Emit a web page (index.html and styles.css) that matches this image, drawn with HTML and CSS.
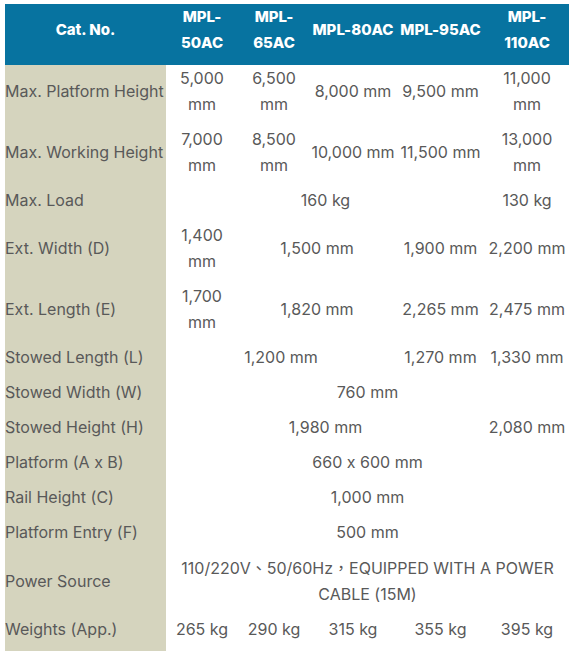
FILE: index.html
```html
<!DOCTYPE html>
<html lang="en">
<head>
<meta charset="utf-8">
<title>MPL Specifications</title>
<link rel="stylesheet" href="styles.css">
</head>
<body>
<div class="wrap">
<table class="spec">
  <colgroup>
    <col class="c-label">
    <col class="c-a">
    <col class="c-b">
    <col class="c-c">
    <col class="c-d">
    <col class="c-e">
  </colgroup>
  <thead>
    <tr>
      <th>Cat. No.</th>
      <th>MPL-<br>50AC</th>
      <th>MPL-<br>65AC</th>
      <th>MPL-80AC</th>
      <th>MPL-95AC</th>
      <th>MPL-<br>110AC</th>
    </tr>
  </thead>
  <tbody>
    <tr>
      <td class="label">Max. Platform Height</td>
      <td>5,000<br>mm</td>
      <td>6,500<br>mm</td>
      <td>8,000 mm</td>
      <td>9,500 mm</td>
      <td>11,000<br>mm</td>
    </tr>
    <tr>
      <td class="label">Max. Working Height</td>
      <td>7,000<br>mm</td>
      <td>8,500<br>mm</td>
      <td>10,000 mm</td>
      <td>11,500 mm</td>
      <td>13,000<br>mm</td>
    </tr>
    <tr>
      <td class="label">Max. Load</td>
      <td colspan="4">160 kg</td>
      <td>130 kg</td>
    </tr>
    <tr>
      <td class="label">Ext. Width (D)</td>
      <td>1,400<br>mm</td>
      <td colspan="2">1,500 mm</td>
      <td>1,900 mm</td>
      <td>2,200 mm</td>
    </tr>
    <tr>
      <td class="label">Ext. Length (E)</td>
      <td>1,700<br>mm</td>
      <td colspan="2">1,820 mm</td>
      <td>2,265 mm</td>
      <td>2,475 mm</td>
    </tr>
    <tr>
      <td class="label">Stowed Length (L)</td>
      <td colspan="3">1,200 mm</td>
      <td>1,270 mm</td>
      <td>1,330 mm</td>
    </tr>
    <tr>
      <td class="label">Stowed Width (W)</td>
      <td colspan="5">760 mm</td>
    </tr>
    <tr>
      <td class="label">Stowed Height (H)</td>
      <td colspan="4">1,980 mm</td>
      <td>2,080 mm</td>
    </tr>
    <tr>
      <td class="label">Platform (A x B)</td>
      <td colspan="5">660 x 600 mm</td>
    </tr>
    <tr>
      <td class="label">Rail Height (C)</td>
      <td colspan="5">1,000 mm</td>
    </tr>
    <tr>
      <td class="label">Platform Entry (F)</td>
      <td colspan="5">500 mm</td>
    </tr>
    <tr>
      <td class="label">Power Source</td>
      <td colspan="5">110/220V<span class="sep">、</span>50/60Hz<span class="sep">，</span>EQUIPPED WITH A POWER<br>CABLE (15M)</td>
    </tr>
    <tr>
      <td class="label">Weights (App.)</td>
      <td>265 kg</td>
      <td>290 kg</td>
      <td>315 kg</td>
      <td>355 kg</td>
      <td>395 kg</td>
    </tr>
  </tbody>
</table>
</div>
</body>
</html>
```
FILE: styles.css
```css
html, body {
  margin: 0;
  padding: 0;
  background: #ffffff;
}

.wrap {
  padding: 4px 3px 0 5px;
}

.spec {
  width: 564px;
  table-layout: fixed;
  border-collapse: collapse;
  font-family: Inter, "Noto Sans", "Noto Sans CJK TC", sans-serif;
  font-size: 16px;
  line-height: 26px;
  color: #595959;
  font-feature-settings: "calt" 0;
}

.c-label { width: 161px; }
.c-a { width: 72px; }
.c-b { width: 72px; }
.c-c { width: 86px; }
.c-d { width: 89px; }
.c-e { width: 84px; }

.spec th {
  background: #0773a0;
  color: #ffffff;
  font-size: 15px;
  font-weight: 800;
  text-align: center;
  vertical-align: middle;
  padding: 0 0 9px;
  white-space: nowrap;
}

.spec td {
  text-align: center;
  vertical-align: middle;
  padding: 0 0 9px;
  white-space: nowrap;
}

.spec td.label {
  background: #d5d4be;
  text-align: left;
}

.sep {
  font-family: "Noto Sans CJK TC", sans-serif;
  font-size: 16px;
}
```
